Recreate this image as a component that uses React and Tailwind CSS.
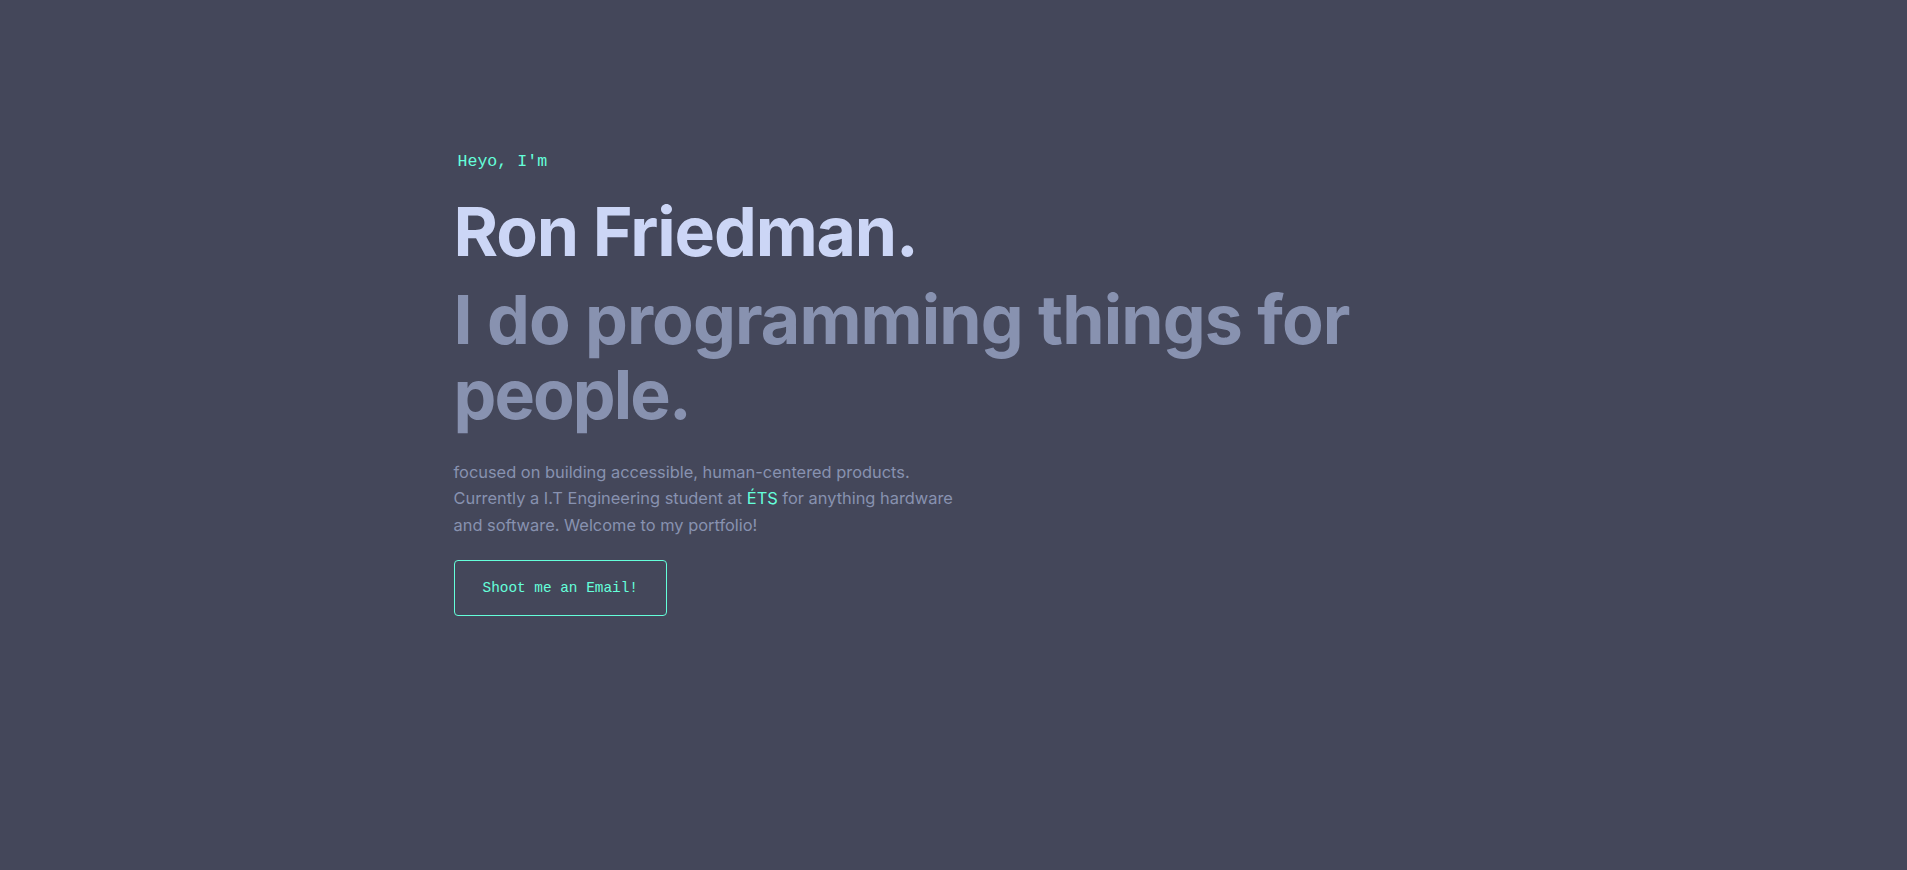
import React from 'react';

const mono = { fontFamily: '"Liberation Mono", "DejaVu Sans Mono", monospace' };

export default function App() {
  return (
    <div
      className="min-h-screen w-full bg-[#44475a]"
      style={{ fontFamily: 'Inter, "Noto Sans", sans-serif' }}
    >
      <section className="mx-auto w-[1000px] pt-[152px]">
        {/* Intro */}
        <h1
          className="ml-[4px] text-[16.6px] leading-[20px] text-[#64ffda]"
          style={mono}
        >
          Heyo, I'm
        </h1>

        <h2 className="mt-[22px] text-[68px] leading-[1.1] font-bold tracking-[-0.017em] text-[#ccd6f6]">
          Ron Friedman.
        </h2>
        <h3 className="mt-[13px] text-[68px] leading-[75px] font-bold tracking-[-0.013em] text-[#8892b0]">
          I do programming things for
          <br />
          <span className="tracking-[-0.028em]">people.</span>
        </h3>

        <p className="mt-[27px] text-[16.4px] leading-[26.5px] text-[#8892b0]">
          focused on building accessible, human-centered products.
          <br />
          Currently a I.T Engineering student at{' '}
          <span className="text-[#64ffda]">ÉTS</span> for anything hardware
          <br />
          and software. Welcome to my portfolio!
        </p>

        <a
          href="mailto:"
          className="mt-[22px] inline-block rounded-[4px] border border-[#64ffda] px-[28px] py-[20px] text-[14.4px] leading-[14px] text-[#64ffda]"
          style={mono}
        >
          Shoot me an Email!
        </a>
      </section>
    </div>
  );
}
